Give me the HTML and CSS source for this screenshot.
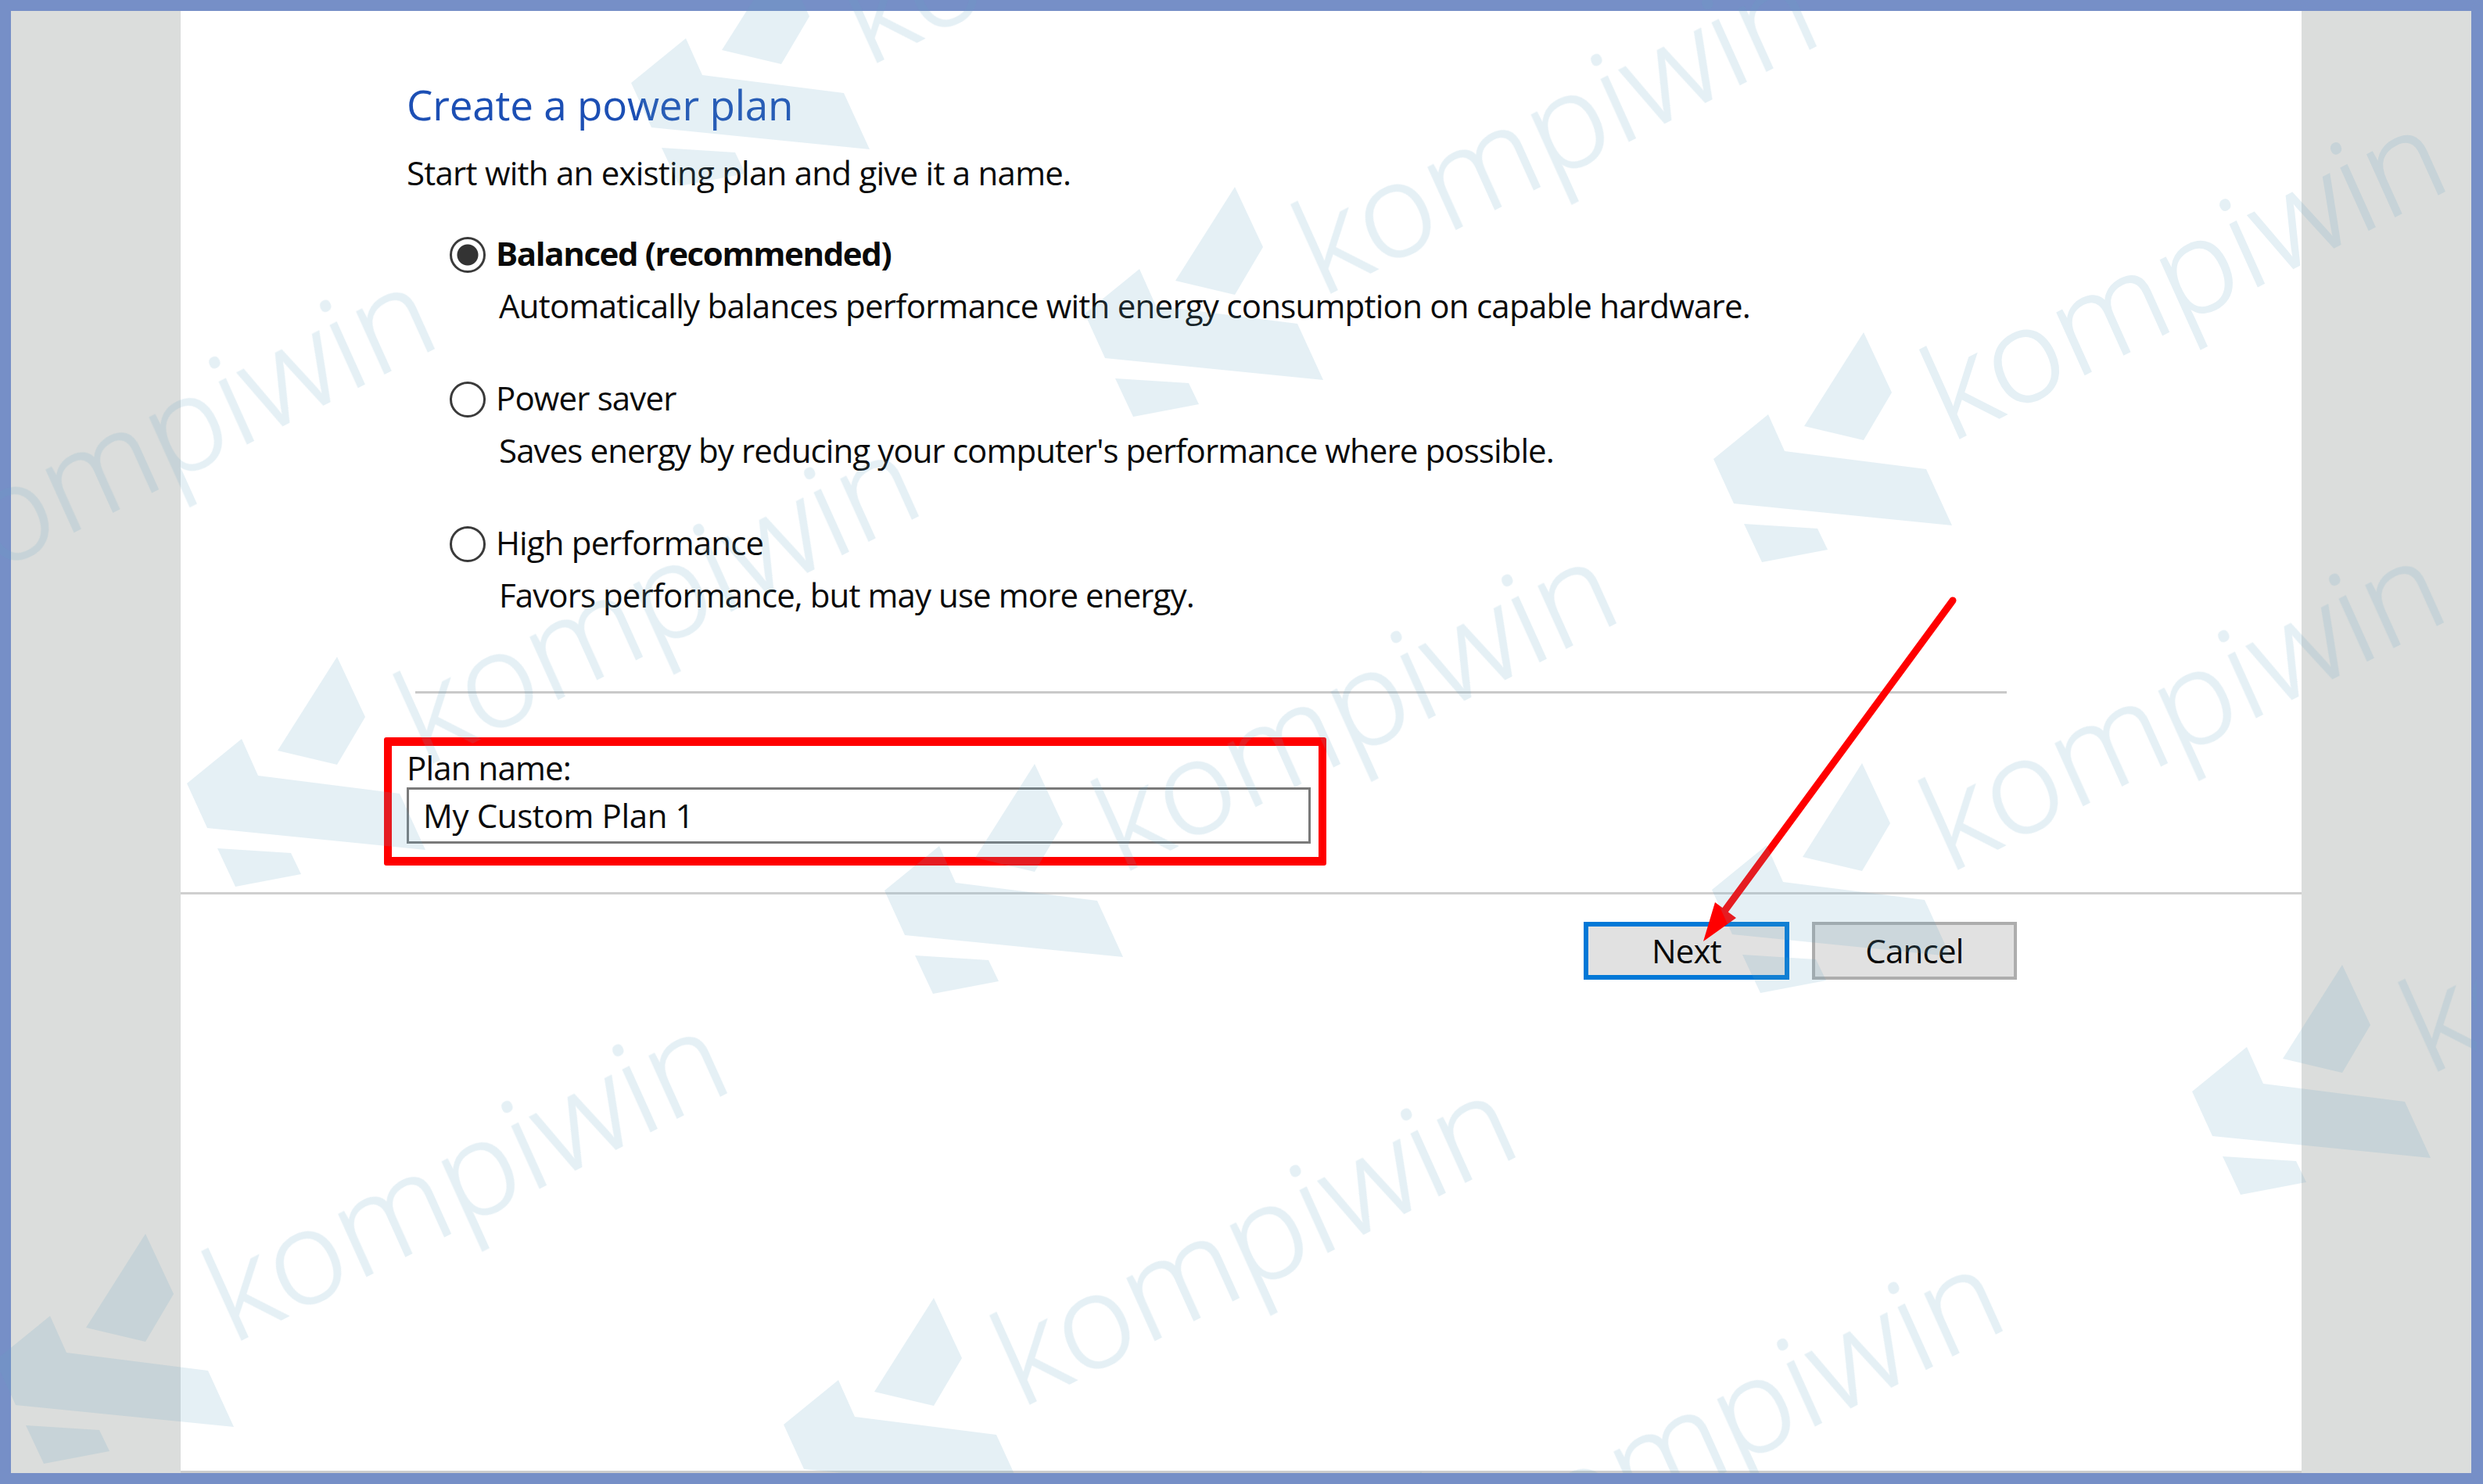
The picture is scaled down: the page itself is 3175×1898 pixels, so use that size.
FILE: index.html
```html
<!DOCTYPE html>
<html lang="en">
<head>
    <meta charset="UTF-8">
    <title>Create a power plan</title>
    <link rel="stylesheet" href="styles.css">
</head>
<body>
    <div class="frame">
        <div class="side"></div>
        <main class="panel">
            <div class="content">
                <h1>Create a power plan</h1>
                <p class="intro">Start with an existing plan and give it a name.</p>

                <div class="options">
                    <div class="option">
                        <label class="option-label selected">
                            <input type="radio" name="plan" class="radio" checked>
                            <span>Balanced (recommended)</span>
                        </label>
                        <p class="option-desc">Automatically balances performance with energy consumption on capable hardware.</p>
                    </div>
                    <div class="option">
                        <label class="option-label">
                            <input type="radio" name="plan" class="radio">
                            <span>Power saver</span>
                        </label>
                        <p class="option-desc tight">Saves energy by reducing your computer's performance where possible.</p>
                    </div>
                    <div class="option">
                        <label class="option-label">
                            <input type="radio" name="plan" class="radio">
                            <span>High performance</span>
                        </label>
                        <p class="option-desc tight">Favors performance, but may use more energy.</p>
                    </div>
                </div>

                <div class="divider"></div>

                <div class="plan-box">
                    <label class="plan-label" for="planName">Plan name:</label>
                    <input type="text" id="planName" class="plan-input" value="My Custom Plan 1">
                </div>
            </div>

            <div class="footer">
                <button type="button" class="btn btn-primary">Next</button>
                <button type="button" class="btn">Cancel</button>
            </div>
        </main>
        <div class="side"></div>
    </div>

    <!-- arrow and the site's watermark lie over the whole screenshot -->
    <svg class="overlay" width="3167" height="1884" viewBox="0 0 3167 1884">
        <defs>
            <g id="mark">
                <polygon points="192,0 228,77 192,138 116,120"/>
                <polygon points="70,105 91,152 272,175 305,247 26,219 0,162"/>
                <polygon points="39,245 133,251 146,278 62,294"/>
                <text class="mark-text" transform="matrix(.891 -.454 .411 .911 302 142)" textLength="724" lengthAdjust="spacingAndGlyphs">kompiwin</text>
            </g>
        </defs>

        <line x1="2497" y1="768" x2="2203" y2="1168" class="arrow-line"/>
        <polygon points="2178,1204 2193,1154 2220,1174" class="arrow-head"/>

        <g class="marks">
            <use href="#mark" x="807" y="-56"/>
            <use href="#mark" x="1387" y="239"/>
            <use href="#mark" x="2191" y="425"/>
            <use href="#mark" x="-380" y="626"/>
            <use href="#mark" x="239" y="840"/>
            <use href="#mark" x="1131" y="977"/>
            <use href="#mark" x="2189" y="976"/>
            <use href="#mark" x="2803" y="1234"/>
            <use href="#mark" x="-6" y="1578"/>
            <use href="#mark" x="1002" y="1660"/>
            <use href="#mark" x="1625" y="1882"/>
        </g>
    </svg>
</body>
</html>
```

FILE: styles.css
```css
html,
body {
    margin: 0;
    padding: 0;
    background-color: #fff;
}

body {
    position: relative;
    width: 3175px;
    height: 1898px;
    overflow: hidden;
    font-family: "Open Sans", "Noto Sans", sans-serif;
    color: #0a0a0a;
}

.frame {
    display: flex;
    box-sizing: border-box;
    width: 3175px;
    height: 1898px;
    border: 14px solid #768fc7;
    border-right-width: 15px;
    background-color: #dbdddc;
}

.side {
    flex: 0 0 217px;
}

.panel {
    flex: 1;
    box-sizing: border-box;
    background-color: #fff;
    border-bottom: 3px solid #cdcdcd;
}

.content {
    padding: 90px 0 0 289px;
}

h1 {
    margin: 0;
    font-size: 53px;
    font-weight: 400;
    line-height: 60px;
    color: #1c4fb4;
    letter-spacing: -0.2px;
}

p {
    margin: 0;
}

.intro {
    margin-top: 32px;
    font-size: 42px;
    line-height: 50px;
    letter-spacing: -0.75px;
}

.options {
    display: flex;
    flex-direction: column;
    gap: 68px;
    margin-top: 53px;
    margin-left: 55px;
}

.option-label {
    display: flex;
    align-items: center;
    gap: 13px;
    height: 50px;
    font-size: 42px;
    line-height: 50px;
    letter-spacing: -0.85px;
}

.selected {
    font-weight: 700;
    letter-spacing: -1.4px;
}

.radio {
    appearance: none;
    box-sizing: border-box;
    flex: none;
    width: 46px;
    height: 46px;
    margin: 4px 0 0;
    border: 3px solid #3a3a3a;
    border-radius: 50%;
    background: #fff;
}

.radio:checked {
    background: radial-gradient(circle, #333 0 13px, #fff 14px);
}

.option-desc {
    margin-top: 17px;
    margin-left: 63px;
    font-size: 42px;
    line-height: 50px;
    letter-spacing: -0.75px;
}

.tight {
    letter-spacing: -0.9px;
}

.divider {
    width: 2035px;
    height: 3px;
    margin-top: 98px;
    margin-left: 11px;
    background-color: #c9c9c9;
}

.plan-box {
    box-sizing: border-box;
    width: 1205px;
    height: 164px;
    margin-top: 56px;
    margin-left: -29px;
    padding: 8px 0 0 19px;
    border: 10px solid #f00;
    border-top-width: 11px;
    border-bottom-width: 11px;
    border-radius: 3px;
}

.plan-label {
    display: block;
    font-size: 42px;
    line-height: 40px;
    letter-spacing: -0.85px;
}

.plan-input {
    display: block;
    box-sizing: border-box;
    width: 1156px;
    height: 72px;
    margin-top: 5px;
    padding: 0 18px 2px;
    border: 3px solid #7a7a7a;
    border-radius: 0;
    outline: none;
    background: transparent;
    font-family: inherit;
    font-size: 42px;
    letter-spacing: -0.35px;
    color: #0a0a0a;
}

.footer {
    display: flex;
    justify-content: flex-end;
    gap: 29px;
    margin-top: 34px;
    padding: 35px 364px 0 0;
    border-top: 3px solid #cfcfcf;
}

.btn {
    box-sizing: border-box;
    width: 262px;
    height: 74px;
    padding: 0 0 2px;
    border: 4px solid #adadad;
    border-radius: 0;
    background-color: #e1e1e1;
    font-family: inherit;
    font-size: 42px;
    letter-spacing: -0.75px;
    color: #0a0a0a;
}

.btn-primary {
    width: 263px;
    border: 6px solid #0078d7;
}

.overlay {
    position: absolute;
    top: 0;
    left: 0;
    pointer-events: none;
}

.arrow-line {
    stroke: #f00;
    stroke-width: 9;
    stroke-linecap: round;
}

.arrow-head {
    fill: #f00;
}

.marks {
    fill: rgb(102, 167, 197);
    opacity: 0.17;
}

.mark-text {
    font-family: "Open Sans", sans-serif;
    font-size: 163px;
    font-weight: 300;
    stroke: rgb(102, 167, 197);
    stroke-width: 2;
}
```
